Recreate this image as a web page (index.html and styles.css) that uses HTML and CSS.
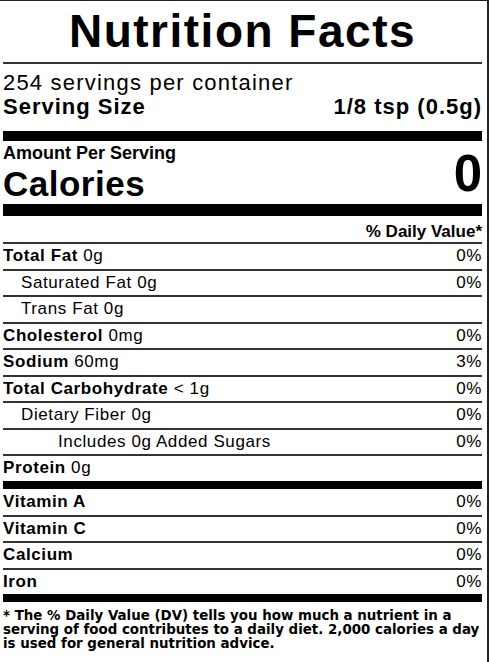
FILE: index.html
```html
<!DOCTYPE html>
<html lang="en">
<head>
    <meta charset="UTF-8">
    <meta name="viewport" content="width=device-width, initial-scale=1.0">
    <title>Nutrition Facts</title>
    <link rel="stylesheet" href="styles.css">
</head>
<body>

    <!-- Nutrition label -->
    <div class="label">
        <h1 class="title">Nutrition Facts</h1>

        <!-- Servings -->
        <div class="servings">
            <p class="servings-count">254 servings per container</p>
            <div class="serving-size">
                <span>Serving Size</span>
                <span>1/8 tsp (0.5g)</span>
            </div>
        </div>

        <!-- Calories -->
        <div class="amount">
            <div>
                <p class="amount-label">Amount Per Serving</p>
                <p class="calories">Calories</p>
            </div>
            <span class="calories-value">0</span>
        </div>

        <p class="dv-head">% Daily Value*</p>

        <!-- Nutrients -->
        <div class="nutrients">
            <div class="row"><span><b>Total Fat</b> 0g</span><span>0%</span></div>
            <div class="row indent"><span>Saturated Fat 0g</span><span>0%</span></div>
            <div class="row indent"><span>Trans Fat 0g</span><span></span></div>
            <div class="row"><span><b>Cholesterol</b> 0mg</span><span>0%</span></div>
            <div class="row"><span><b>Sodium</b> 60mg</span><span>3%</span></div>
            <div class="row"><span><b>Total Carbohydrate</b> &lt; 1g</span><span>0%</span></div>
            <div class="row indent"><span>Dietary Fiber 0g</span><span>0%</span></div>
            <div class="row indent-2"><span>Includes 0g Added Sugars</span><span>0%</span></div>
            <div class="row"><span><b>Protein</b> 0g</span><span></span></div>
        </div>

        <!-- Vitamins and minerals -->
        <div class="vitamins">
            <div class="row"><b>Vitamin A</b><span>0%</span></div>
            <div class="row"><b>Vitamin C</b><span>0%</span></div>
            <div class="row"><b>Calcium</b><span>0%</span></div>
            <div class="row"><b>Iron</b><span>0%</span></div>
        </div>

        <p class="footnote">* The % Daily Value (DV) tells you how much a nutrient in a<br>serving of food contributes to a daily diet. 2,000 calories a day<br>is used for general nutrition advice.</p>
    </div>

</body>
</html>
```

FILE: styles.css
```css
body {
    margin: 0;
    background: #fff;
    color: #000;
    font-family: "Liberation Sans", Arial, sans-serif;
    overflow: hidden;
}

p {
    margin: 0;
}

.label {
    width: 479px;
    margin: -1px 0 0 -4px; /* left edge of the label is cut off */
    padding: 0 5px 30px;
    border: 2px solid #222;
}

.title {
    margin: 0;
    font-size: 46px;
    font-weight: bold;
    line-height: 61px;
    letter-spacing: 1.5px;
    text-align: center;
    border-bottom: 2px solid #333;
}

/* Servings */
.servings {
    padding: 7px 0 12px;
    border-bottom: 10px solid #000;
}

.servings-count {
    font-size: 22px;
    line-height: 24px;
    letter-spacing: 1.2px;
}

.serving-size {
    display: flex;
    justify-content: space-between;
    font-size: 22px;
    font-weight: bold;
    line-height: 24px;
    letter-spacing: 1px;
}

/* Calories */
.amount {
    display: flex;
    justify-content: space-between;
    align-items: flex-end;
    padding: 2px 0 1px;
    border-bottom: 12px solid #000;
}

.amount-label {
    font-size: 18px;
    font-weight: bold;
    line-height: 20.5px;
}

.calories {
    font-size: 35px;
    font-weight: bold;
    line-height: 39.5px;
    letter-spacing: 0.5px;
}

.calories-value {
    margin-bottom: 5px;
    font-size: 51px;
    font-weight: bold;
    line-height: 48px;
}

.dv-head {
    height: 20px;
    padding-top: 6px;
    font-size: 17px;
    font-weight: bold;
    line-height: 20px;
    text-align: right;
}

/* Rows */
.row {
    display: flex;
    justify-content: space-between;
    padding: 1px 0;
    border-top: 2px solid #333;
    font-size: 17px;
    line-height: 22.5px;
    letter-spacing: 0.6px;
}

.row.indent {
    padding-left: 18px;
}

.row.indent-2 {
    padding-left: 55px;
}

.nutrients {
    border-bottom: 8px solid #000;
}

.vitamins {
    border-bottom: 8px solid #000;
}

.vitamins .row:first-child {
    border-top: 0;
    padding-top: 2.5px;
}

/* Footnote */
.footnote {
    padding-top: 7px;
    font-family: "DejaVu Sans", Verdana, sans-serif;
    font-size: 13.4px;
    font-weight: bold;
    line-height: 14px;
    white-space: nowrap;
}
```
